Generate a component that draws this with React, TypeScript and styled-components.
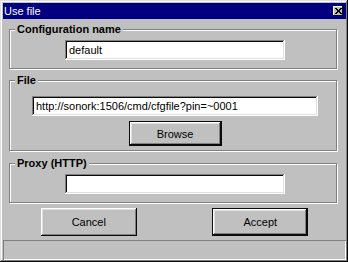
import React from "react";
import styled, { createGlobalStyle, css } from "styled-components";

const Global = createGlobalStyle`
  html, body { margin: 0; padding: 0; background: #c0c0c0; }
  body { font-family: "Liberation Sans", Arial, sans-serif; font-size: 11px; }
  * { box-sizing: border-box; }
`;

const Frame = styled.div`
  width: 348px;
  height: 262px;
  background: #c0c0c0;
  padding: 3px 2px 2px 3px;
  display: flex;
  flex-direction: column;
  box-shadow: inset -1px -1px 0 #0a0a0a, inset 1px 1px 0 #dfdfdf,
    inset -2px -2px 0 #808080, inset 2px 2px 0 #ffffff;
`;

const TitleBar = styled.div`
  height: 16px;
  background: #000080;
  color: #ffffff;
  display: flex;
  align-items: center;
  justify-content: space-between;
  padding: 0 3px 0 1px;
  font-size: 11px;
  line-height: 13px;
`;

const CloseButton = styled.div`
  width: 10px;
  height: 10px;
  background: #c0c0c0;
  display: flex;
  align-items: center;
  justify-content: center;
  box-shadow: inset -1px -1px 0 #0a0a0a, inset 1px 1px 0 #ffffff;
`;

const Body = styled.div`
  display: flex;
  flex-direction: column;
  padding: 4px 9px 0 6px;
`;

const Group = styled.fieldset<{ $pt: number; $pb: number; $mt: number }>`
  margin: ${(p) => p.$mt}px 0 0 0;
  padding: ${(p) => p.$pt}px 0 ${(p) => p.$pb}px 4px;
  min-width: 0;
  border: 1px solid #808080;
  box-shadow: 1px 1px 0 #ffffff, inset 1px 1px 0 #ffffff;
  display: flex;
  flex-direction: column;
  align-items: center;
  gap: 5px;
`;

const Legend = styled.legend`
  margin-left: 1px;
  padding: 0 2px;
  font-weight: bold;
  font-size: 11px;
  line-height: 13px;
  color: #000;
  background: #c0c0c0;
`;

const TextField = styled.div<{ $w: number }>`
  width: ${(p) => p.$w}px;
  height: 20px;
  background: #ffffff;
  padding: 0 4px;
  display: flex;
  align-items: center;
  white-space: nowrap;
  overflow: hidden;
  color: #000;
  box-shadow: inset -1px -1px 0 #ffffff, inset 1px 1px 0 #808080,
    inset -2px -2px 0 #dfdfdf, inset 2px 2px 0 #0a0a0a;
`;

const Button = styled.div<{ $w: number; $h: number; $default?: boolean }>`
  width: ${(p) => p.$w}px;
  height: ${(p) => p.$h}px;
  background: #c0c0c0;
  display: flex;
  align-items: center;
  justify-content: center;
  color: #000;
  box-shadow: inset -1px -1px 0 #0a0a0a, inset 1px 1px 0 #ffffff,
    inset -2px -2px 0 #808080, inset 2px 2px 0 #dfdfdf;
  ${(p) =>
    p.$default &&
    css`
      border: 1px solid #0a0a0a;
    `}
`;

const ButtonRow = styled.div`
  display: flex;
  justify-content: space-around;
  margin-top: 5px;
`;

const StatusBar = styled.div`
  height: 20px;
  margin-top: 4px;
  box-shadow: inset 1px 1px 0 #808080, inset -1px -1px 0 #ffffff;
`;

export default function App() {
  return (
    <>
      <Global />
      <Frame>
        <TitleBar>
          <span>Use file</span>
          <CloseButton>
            <svg width="7" height="6" viewBox="0 0 7 6" shapeRendering="crispEdges">
              <path d="M0 0h2v1h-2zM5 0h2v1h-2zM1 1h2v1h-2zM4 1h2v1h-2zM2 2h3v2h-3zM1 4h2v1h-2zM4 4h2v1h-2zM0 5h2v1h-2zM5 5h2v1h-2z" fill="#000" />
            </svg>
          </CloseButton>
        </TitleBar>
        <Body>
          <Group $pt={4} $pb={8} $mt={0}>
            <Legend>Configuration name</Legend>
            <TextField $w={220}>default</TextField>
          </Group>
          <Group $pt={9} $pb={4} $mt={5}>
            <Legend>File</Legend>
            <TextField $w={286}>http://sonork:1506/cmd/cfgfile?pin=~0001</TextField>
            <Button $w={93} $h={25} $default>
              Browse
            </Button>
          </Group>
          <Group $pt={4} $pb={8} $mt={6}>
            <Legend>Proxy (HTTP)</Legend>
            <TextField $w={220} />
          </Group>
        </Body>
        <ButtonRow>
          <Button $w={96} $h={28}>
            Cancel
          </Button>
          <Button $w={96} $h={28} $default>
            Accept
          </Button>
        </ButtonRow>
        <StatusBar />
      </Frame>
    </>
  );
}
